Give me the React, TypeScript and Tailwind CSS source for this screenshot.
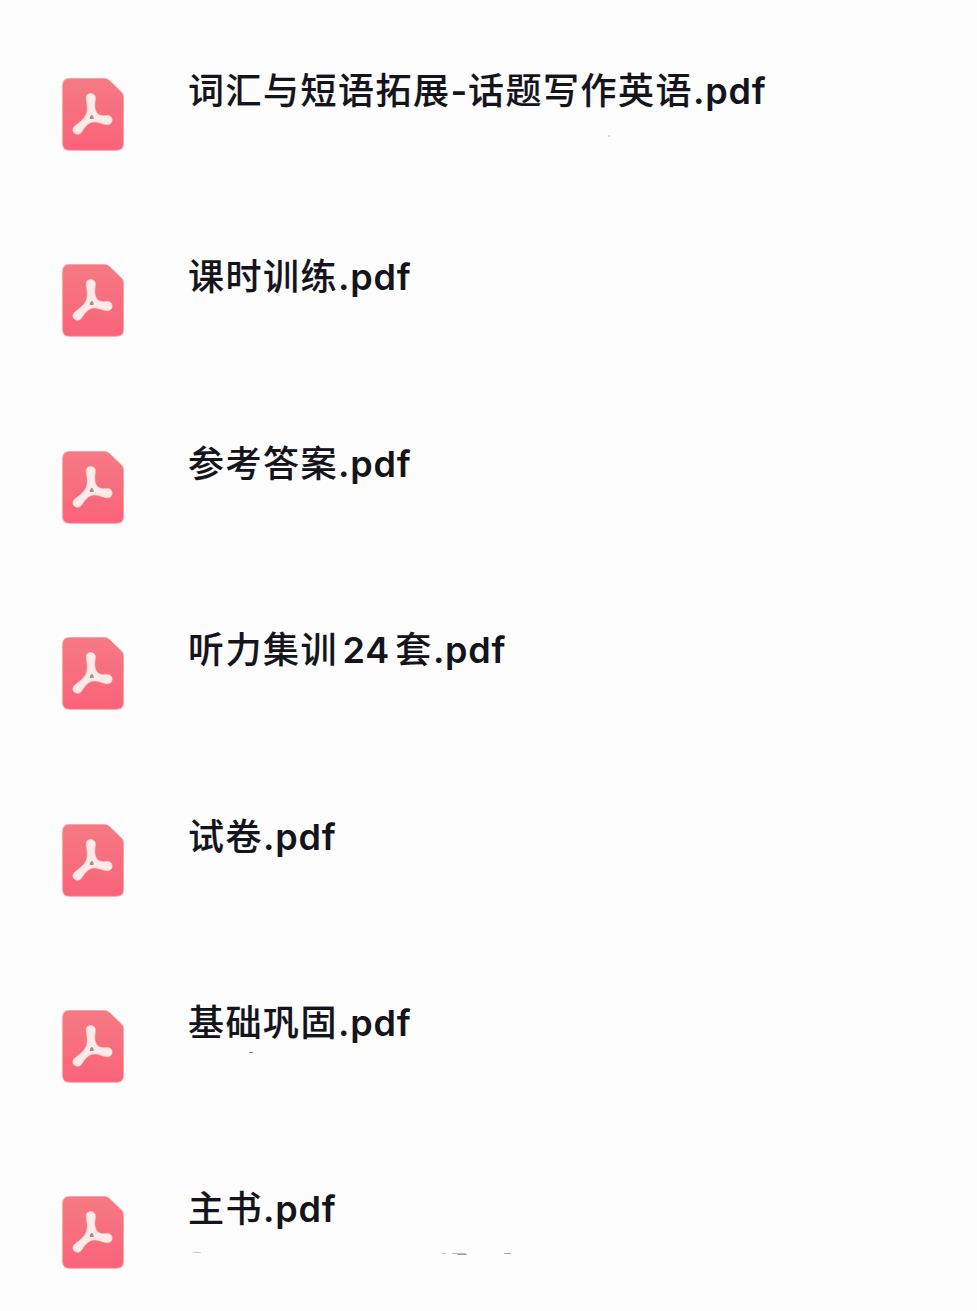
type Residue = { className: string };

type FileItem = {
  parts: { text: string; latin?: boolean; className?: string }[];
  residues?: Residue[];
};

const files: FileItem[] = [
  {
    parts: [
      { text: '词汇与短语拓展' },
      { text: '-', latin: true },
      { text: '话题写作英语' },
      { text: '.pdf', latin: true },
    ],
    residues: [{ className: 'left-[608px] top-[135px] h-[2px] w-[2px] bg-[#d5d5d8]' }],
  },
  { parts: [{ text: '课时训练' }, { text: '.pdf', latin: true }] },
  { parts: [{ text: '参考答案' }, { text: '.pdf', latin: true }] },
  {
    parts: [
      { text: '听力集训' },
      { text: '24', latin: true, className: 'ml-[4.5px] mr-[5.5px]' },
      { text: '套' },
      { text: '.pdf', latin: true },
    ],
  },
  { parts: [{ text: '试卷' }, { text: '.pdf', latin: true }] },
  {
    parts: [{ text: '基础巩固' }, { text: '.pdf', latin: true }],
    residues: [{ className: 'left-[249px] top-[120px] h-px w-[4px] bg-[#77777a]' }],
  },
  {
    parts: [{ text: '主书' }, { text: '.pdf', latin: true }],
    residues: [
      { className: 'left-[193px] top-[134px] h-px w-[8px] bg-[#c9c9cb]' },
      { className: 'left-[441px] top-[135px] h-px w-[5px] bg-[#cfcfd1]' },
      { className: 'left-[452px] top-[135px] h-px w-[14px] bg-[#bdbdbf]' },
      { className: 'left-[457px] top-[136px] h-px w-[10px] bg-[#a0a0a2]' },
      { className: 'left-[504px] top-[135px] h-px w-[7px] bg-[#a5a5a7]' },
    ],
  },
];

function PdfIcon() {
  return (
    <svg className="mt-[78px] h-[73px] w-[62px] shrink-0" viewBox="0 0 62 73" fill="none">
      <defs>
        <linearGradient id="pdf-bg" x1="0" y1="0" x2="0" y2="1">
          <stop offset="0" stopColor="#f67a84" />
          <stop offset="0.5" stopColor="#f86e7e" />
          <stop offset="1" stopColor="#fb637a" />
        </linearGradient>
      </defs>
      <path
        d="M7.5 .5H42.5Q45.3 .5 47.2 2.3L59.5 14Q61.5 16 61.5 19V65.5Q61.5 72.3 54.5 72.3H7.5Q.6 72.3 .6 65.5V7.5Q.6 .5 7.5 .5Z"
        fill="url(#pdf-bg)"
        stroke="#fa9ba3"
        strokeWidth="0.8"
      />
      <path
        d="M24.2 20.8C23.8 17.6 25.7 15.4 28.7 15.4C31.9 15.4 33.8 17.7 33.4 20.9C32.7 26 32.3 30 34 33.3C35.4 36.3 38.5 38.3 43.7 37.5C47.6 36.9 50.2 38.8 50.2 42C50.2 45.4 47.6 47.3 44.2 46.7C39.5 45.8 36 43.8 31.8 44C26.8 44.3 23.1 48.5 19.9 53.7C18.1 56.4 15 57.1 12.6 55.3C10.2 53.4 10.3 50.1 12.8 48C17.9 44 21.7 41.5 24.1 36.4C26.3 31.5 24.8 26.2 24.2 20.8Z"
        fill="#feebe7"
        stroke="#f9cfcf"
        strokeWidth="0.6"
      />
      <path
        d="M29.8 36.8C30.5 36.8 32.1 39.7 31.8 40.5C31.5 41.2 28 41.2 27.7 40.5C27.4 39.8 29.1 36.8 29.8 36.8Z"
        fill="#a98d93"
      />
    </svg>
  );
}

function FileRow({ file }: { file: FileItem }) {
  return (
    <li className="relative flex h-[186.4px] pl-[62px]">
      <PdfIcon />
      <p className="ml-[64px] mt-[63px] h-[50px] whitespace-nowrap font-['Noto_Sans_CJK_SC',sans-serif] text-[36px] font-medium leading-[50px] tracking-[1.5px] text-[#14141c]">
        {file.parts.map((part, index) => (
          <span
            key={index}
            className={
              part.latin
                ? `font-['Inter','Noto_Sans_CJK_SC',sans-serif] font-semibold tracking-[0.75px] ${part.className ?? ''}`
                : '[-webkit-text-stroke:0.15px_#14141c]'
            }
          >
            {part.text}
          </span>
        ))}
      </p>
      {file.residues?.map((residue, index) => (
        <span key={index} className={`absolute rounded-full ${residue.className}`} />
      ))}
    </li>
  );
}

export default function App() {
  return (
    <main className="h-[1311px] w-full overflow-hidden bg-[#fdfdfd]">
      <ul>
        {files.map((file, index) => (
          <FileRow key={index} file={file} />
        ))}
      </ul>
    </main>
  );
}
